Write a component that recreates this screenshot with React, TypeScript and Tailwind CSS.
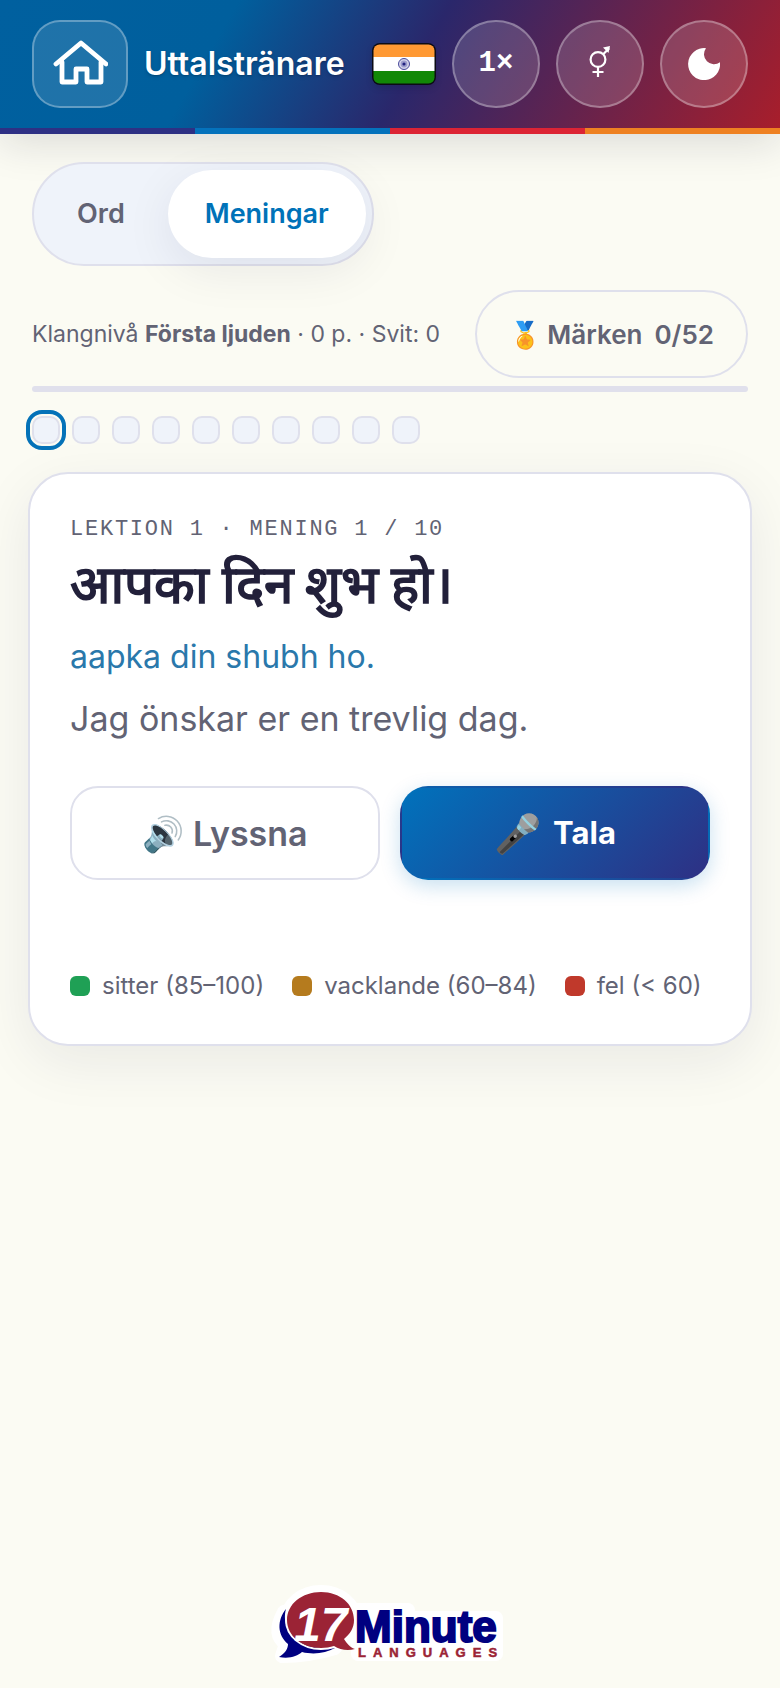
import React, { useState } from 'react';

type Mode = 'ord' | 'meningar';

interface Legend {
    label: string;
    color: string;
}

const LEGEND: Legend[] = [
    { label: 'sitter (85–100)', color: 'bg-[#1fa055]' },
    { label: 'vacklande (60–84)', color: 'bg-[#b57b1e]' },
    { label: 'fel (< 60)', color: 'bg-[#c0392b]' },
];

const STEPS = 10;

const HomeIcon = () => (
    <svg className="h-[56px] w-[56px]" viewBox="0 0 56 56" fill="none" stroke="currentColor" strokeWidth={4.8} strokeLinecap="round" strokeLinejoin="round" aria-hidden="true">
        <path d="M4 28 29 7l25 21" />
        <path d="M10 26v20h14V33h11v13h14V26" />
    </svg>
);

const GenderIcon = () => (
    <svg className="size-10" viewBox="0 0 40 40" fill="none" stroke="currentColor" strokeWidth={2.2} aria-hidden="true">
        <circle cx="18" cy="15.5" r="7.4" />
        <path d="M18 23V33M12.5 28h11M23.2 10.2l6-6" />
        <path d="m30 2-7 1.5L28.5 9z" fill="currentColor" stroke="none" />
    </svg>
);

const MoonIcon = () => (
    <svg className="h-8 w-8" viewBox="0 0 32 32" fill="currentColor" aria-hidden="true">
        <path d="M32 14.2A16 16 0 1 1 18 .2 10 10 0 0 0 32 14.2z" />
    </svg>
);

const FlagIndia = () => (
    <svg className="h-[42px] w-16 shrink-0 drop-shadow-md" viewBox="0 0 64 42" role="img" aria-label="Hindi">
        <rect width="64" height="42" rx="8" fill="#0b0b14" />
        <clipPath id="flag">
            <rect x="1.5" y="1.5" width="61" height="39" rx="6" />
        </clipPath>
        <g clipPath="url(#flag)">
            <path fill="#ff9933" d="M0 0h64v14H0z" />
            <path fill="#fff" d="M0 14h64v14H0z" />
            <path fill="#128807" d="M0 28h64v14H0z" />
        </g>
        <circle cx="32" cy="21" r="5.5" fill="#d5d5ea" stroke="#4a4a9c" strokeWidth="1" />
        <circle cx="32" cy="21" r="3.4" fill="#9d9dcc" />
        <circle cx="32" cy="21" r="1.6" fill="#22227f" />
    </svg>
);

const BrandLogo = () => (
    <svg className="h-[90px] w-[260px]" viewBox="0 0 260 90" role="img" aria-label="17 Minute Languages">
        <g fill="#fff" stroke="#fff" strokeWidth="14" strokeLinejoin="round">
            <ellipse cx="61" cy="38" rx="34" ry="28" />
            <path d="M24 30Q12 52 26 62L22 74Q48 74 75 66Z" />
            <path d="M98 28h50v8h88v36H98z" />
        </g>
        <path fill="#000080" d="M26 27C17 38 17 53 28 62c0 5-3 9-9 13 11 2 18-1 23-5 12 3 24 1 33-4-22 2-42-6-48-20-2-6-3-12-1-19z" />
        <ellipse cx="61" cy="38" rx="35" ry="29" fill="none" stroke="#fff" strokeWidth="2" />
        <path fill="#9b2335" d="M61 10c19 0 33 12 33 28 0 8-4 14-10 19 3 5 7 9 11 10-7 2-15 1-21-3-4 1-8 2-13 2-19 0-34-12-34-28s15-28 34-28z" />
        <text x="34" y="59" fill="#fff" className="font-['Liberation_Sans'] text-[48px] font-bold italic">17</text>
        <text x="95" y="60" fill="#000080" className="font-['Liberation_Sans'] text-[44px] font-bold" stroke="#000080" strokeWidth="2">Minute</text>
        <text x="98" y="75" fill="#9b2335" className="font-['Liberation_Sans'] text-[13px] font-bold tracking-[7px]" stroke="#9b2335" strokeWidth="0.5">LANGUAGES</text>
    </svg>
);

const ROUND_BUTTON = 'flex size-[88px] shrink-0 items-center justify-center rounded-full border-2 border-white/30 bg-white/15 text-white';

const App: React.FC = () => {
    const [mode, setMode] = useState<Mode>('meningar');
    const [current, setCurrent] = useState(0);

    const tabClass = (value: Mode) =>
        mode === value
            ? 'h-[88px] rounded-full bg-white px-[37px] text-[27px] font-semibold text-[#0072b8] shadow-[0_12px_48px_rgba(30,30,60,0.08)]'
            : 'h-[88px] rounded-full px-[37px] text-[27px] font-semibold text-[#626374]';

    return (
        <div className="flex min-h-screen flex-col bg-[#fbfbf3] font-['Inter',sans-serif] text-[#626374]">
            <header className="shadow-[0_8px_40px_rgba(20,20,50,0.14)]">
                <div className="flex h-32 items-center bg-[linear-gradient(120deg,#00609f_0%,#005f9d_28%,#2a276b_53%,#a81e2b_100%)] px-8">
                    <button type="button" aria-label="Hem" className="flex h-[88px] w-24 shrink-0 items-center justify-center rounded-[28px] border-2 border-white/30 bg-white/12 text-white">
                        <HomeIcon />
                    </button>
                    <h1 className="ml-4 flex-1 truncate text-[32px] font-semibold text-white text-shadow-md">Uttalstränare</h1>
                    <div className="flex items-center gap-4">
                        <FlagIndia />
                        <button type="button" className={`${ROUND_BUTTON} font-['Liberation_Mono',monospace] text-[29px] font-bold`}>1×</button>
                        <button type="button" aria-label="Röst" className={ROUND_BUTTON}>
                            <GenderIcon />
                        </button>
                        <button type="button" aria-label="Mörkt läge" className={ROUND_BUTTON}>
                            <MoonIcon />
                        </button>
                    </div>
                </div>
                <div className="grid h-[6px] grid-cols-4">
                    <span className="bg-[#2e3084]" />
                    <span className="bg-[#0472bc]" />
                    <span className="bg-[#dc2435]" />
                    <span className="bg-[#ee8122]" />
                </div>
            </header>

            <main className="flex-1 px-8 pt-7">
                <div className="inline-flex gap-[6px] rounded-full border-2 border-[#dfe0ec] bg-[#eff3fa] p-[6px] align-top">
                    <button type="button" className={tabClass('ord')} onClick={() => setMode('ord')}>Ord</button>
                    <button type="button" className={tabClass('meningar')} onClick={() => setMode('meningar')}>Meningar</button>
                </div>

                <div className="mt-6 flex items-center justify-between">
                    <p className="text-[23px]">
                        Klangnivå <strong className="font-bold">Första ljuden</strong> · 0 p. · Svit: 0
                    </p>
                    <button type="button" className="flex h-[88px] items-center gap-3 rounded-full border-2 border-[#dfe0ec] px-8 text-[26px] font-semibold">
                        <span>🏅 Märken</span>
                        <span>0/52</span>
                    </button>
                </div>

                <div className="mt-2 h-[6px] rounded-full bg-[#e0e0ec]" />

                <div className="mt-6 flex gap-3">
                    {Array.from({ length: STEPS }, (_, i) => (
                        <button
                            key={i}
                            type="button"
                            aria-label={`Mening ${i + 1}`}
                            onClick={() => setCurrent(i)}
                            className={`size-7 rounded-[10px] border-2 border-[#dfe0ec] bg-[#eff3fa] ${i === current ? 'outline-4 outline-offset-2 outline-[#0472b8]' : ''}`}
                        />
                    ))}
                </div>

                <section className="-mx-1 mt-7 rounded-[40px] border-2 border-[#dfe0ec] bg-white p-10 shadow-[0_16px_56px_rgba(30,30,60,0.08)]">
                    <p className="font-['Liberation_Mono',monospace] text-[22px] leading-8 tracking-[0.08em] uppercase">Lektion 1 · Mening {current + 1} / {STEPS}</p>
                    <h2 lang="hi" className="text-[53px] leading-[76px] font-bold text-[#22203a]">आपका दिन शुभ हो।</h2>
                    <p className="mt-3 text-[32px] leading-[46px] text-[#2a78ab]">aapka din shubh ho.</p>
                    <p className="mt-4 text-[34px] leading-[46px]">Jag önskar er en trevlig dag.</p>

                    <div className="mt-11 grid grid-cols-2 gap-5">
                        <button type="button" className="h-[94px] rounded-[28px] border-2 border-[#dfe0ec] bg-white text-[34px] font-semibold">🔊 Lyssna</button>
                        <button type="button" className="flex h-[94px] items-center justify-center gap-3 rounded-[28px] border-2 border-transparent bg-linear-[135deg,#0072bc,#2e3084] text-[31px] font-bold text-white shadow-[0_6px_20px_rgba(0,114,188,0.22)]">
                            <span className="text-[38px]">🎤</span>
                            Tala
                        </button>
                    </div>

                    <ul className="mt-[88px] flex flex-wrap gap-7 text-[24px] leading-9">
                        {LEGEND.map((item) => (
                            <li key={item.label} className="flex items-center gap-3">
                                <span className={`size-5 rounded-[6px] ${item.color}`} />
                                {item.label}
                            </li>
                        ))}
                    </ul>
                </section>
            </main>

            <footer className="flex justify-center pb-4">
                <BrandLogo />
            </footer>
        </div>
    );
};

export default App;
